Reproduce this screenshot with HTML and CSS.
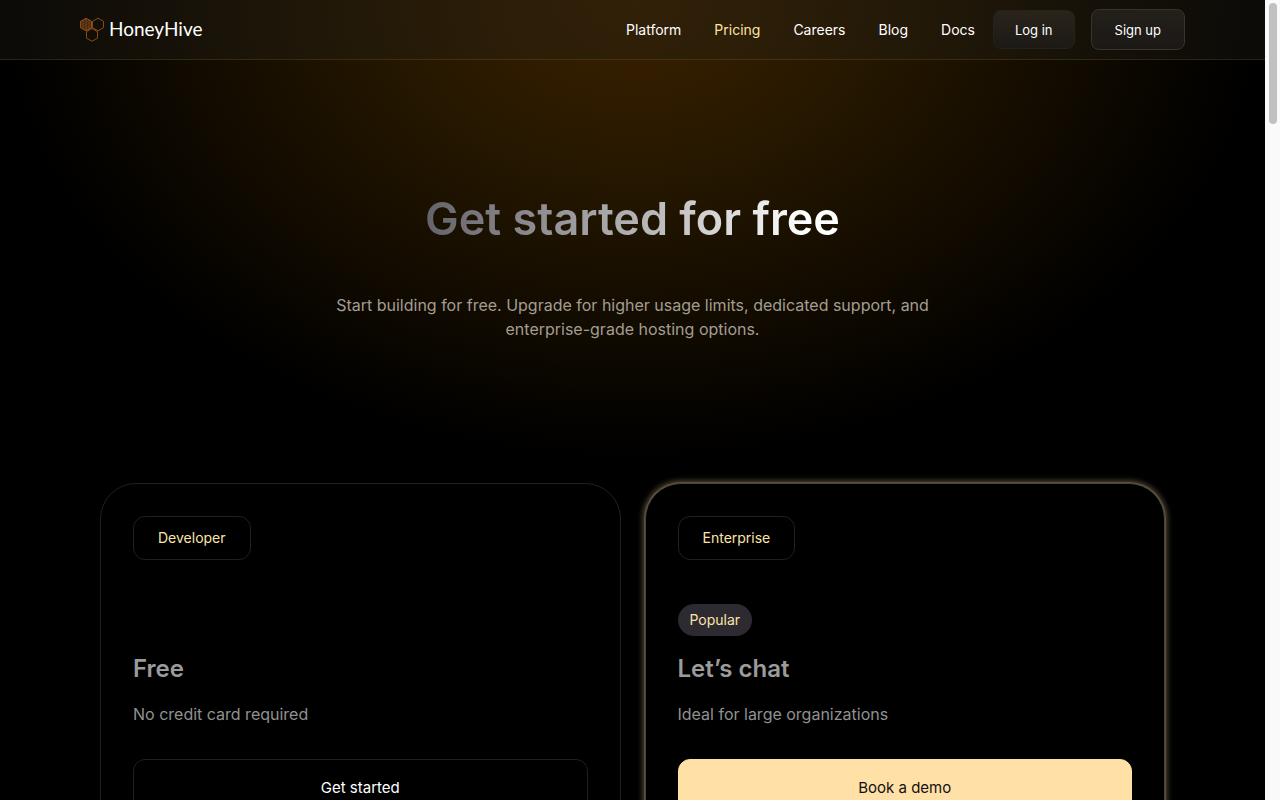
FILE: index.html
```html
<!DOCTYPE html>
<html lang="en">
<head>
<meta charset="utf-8">
<meta name="viewport" content="width=device-width, initial-scale=1">
<title>HoneyHive Pricing</title>
<link rel="stylesheet" href="styles.css">
</head>
<body>
<div class="page">
  <header class="navbar">
    <a class="brand" href="#">
      <svg class="brand-mark" viewBox="0 0 24 25" width="24" height="25" fill="none" stroke="#a55c1c" stroke-width=".8" aria-hidden="true">
        <path d="M6 1.200 11.500 4.300V10.700L6 13.800.5 10.700V4.300Z" fill="#3c2410"/>
        <path d="M18 1.200 23.500 4.300V10.700L18 13.800 12.500 10.700V4.300Z"/>
        <path d="M12 11.500 17.500 14.700V21.100L12 24.300 6.500 21.100V14.700Z"/>
        <path stroke-width=".4" d="M1 5.500 7 2M1 8 10 3M1 10.500 11 5M3 12 11 7.500M5 13.200 11 10M3 3V12M6 1.500V13.500M9 3V12"/>
      </svg>
      <span class="brand-name">HoneyHive</span>
    </a>
    <nav class="links">
      <a href="#">Platform</a>
      <a class="active" href="#">Pricing</a>
      <a href="#">Careers</a>
      <a href="#">Blog</a>
      <a href="#">Docs</a>
    </nav>
    <div class="account">
      <button class="login" type="button">Log in</button>
      <button class="signup" type="button">Sign up</button>
    </div>
  </header>
  <main>
    <section class="hero">
      <h1>Get started for free</h1>
      <p>Start building for free. Upgrade for higher usage limits, dedicated support, and enterprise-grade hosting options.</p>
    </section>
    <section class="plans">
      <article class="card">
        <span class="plan">Developer</span>
        <div class="note"></div>
        <h2>Free</h2>
        <p>No credit card required</p>
        <button class="cta" type="button">Get started</button>
      </article>
      <article class="card featured">
        <span class="plan">Enterprise</span>
        <div class="note"><span class="pill">Popular</span></div>
        <h2>Let’s chat</h2>
        <p>Ideal for large organizations</p>
        <button class="cta primary" type="button">Book a demo</button>
      </article>
    </section>
  </main>
</div>
<div class="scroll-track" aria-hidden="true"><div class="scroll-thumb"></div></div>
</body>
</html>
```
FILE: styles.css
```css
* { box-sizing: border-box; }
body {
  margin: 0;
  height: 100vh;
  display: flex;
  overflow: hidden;
  background: #000;
  color: #fff;
  font-family: Inter, "Liberation Sans", sans-serif;
}
button { font-family: inherit; color: inherit; cursor: pointer; }
.page {
  flex: 1;
  min-width: 0;
  overflow: hidden;
  background: radial-gradient(ellipse 50% 460px at 50% 0, #382000 0, #301c00 20%, #231600 42%, #150d00 65%, #080500 86%, #000 100%) no-repeat #000;
}
.scroll-track { width: 15px; background: #fafafa; padding: 3px 3px 0 4px; }
.scroll-thumb { height: 121px; border-radius: 4px; background: #c1c1c1; }
.navbar {
  height: 60px;
  padding: 0 80px;
  display: flex;
  align-items: center;
  border-bottom: 1px solid rgba(255, 190, 80, .13);
  background: rgba(36, 34, 26, .32);
}
.brand { display: flex; align-items: center; gap: 5px; margin-right: auto; color: #fff; text-decoration: none; }
.brand-name { font-family: Lato, sans-serif; font-size: 19px; line-height: 24px; padding-bottom: 2px; }
.links { display: flex; gap: 33px; font-size: 14px; line-height: 20px; margin-right: 18px; }
.links a { color: #fff; text-decoration: none; }
.links .active { color: #fce4a0; }
.account { display: flex; align-items: center; gap: 16px; }
.account button {
  font-size: 13px;
  line-height: 18px;
  border-radius: 8px;
  border: 1px solid #25211b;
  background: linear-gradient(#2a241a, #1c1916);
}
.account .login { padding: 10px 21px 9px; }
.account .signup { padding: 11px 23px 10px; border-color: #38332b; background: linear-gradient(#242019, #1b1816); }
.hero { padding: 128px 32px 142px; text-align: center; }
.hero h1 {
  display: table;
  margin: 0 auto 43px;
  font-size: 45px;
  line-height: 62px;
  font-weight: 600;
  background: linear-gradient(90deg, #65636a, #b9b8ba 55%, #fff 92%);
  background-clip: text;
  -webkit-background-clip: text;
  color: transparent;
}
.hero p {
  max-width: 640px;
  margin: 0 auto;
  color: #a39d93;
  font-size: 16px;
  line-height: 24px;
}
.plans { padding: 0 100px; display: grid; grid-template-columns: 1fr 1fr; gap: 24px; }
.card {
  padding: 32px;
  border: 1px solid #202020;
  border-radius: 36px;
  background: #000;
  display: flex;
  flex-direction: column;
  align-items: flex-start;
}
.featured { border-color: #4b4335; box-shadow: 0 0 0 1px #5c513f, 0 0 5px 3px #443c2c; }
.plan {
  padding: 11px 24px;
  border: 1px solid #202020;
  border-radius: 12px;
  color: #fce4a8;
  font-size: 14px;
  line-height: 20px;
}
.note { height: 32px; margin: 44px 0 16px; }
.pill { display: block; padding: 5px 12px; border-radius: 16px; background: #2d2b31; color: #fce4a8; font-size: 14px; line-height: 22px; }
.card h2 { margin: 0 0 16px; color: #9b9b9b; font-size: 24px; line-height: 34px; font-weight: 600; }
.card p { margin: 0 0 33px; color: #919191; font-size: 16px; line-height: 24px; }
.cta {
  align-self: stretch;
  padding: 17px;
  border: 1px solid #202020;
  border-radius: 12px;
  background: #000;
  font-size: 15px;
  line-height: 22px;
}
.primary { border-color: #ffe0a6; background: #ffe0a6; color: #111; }
```
